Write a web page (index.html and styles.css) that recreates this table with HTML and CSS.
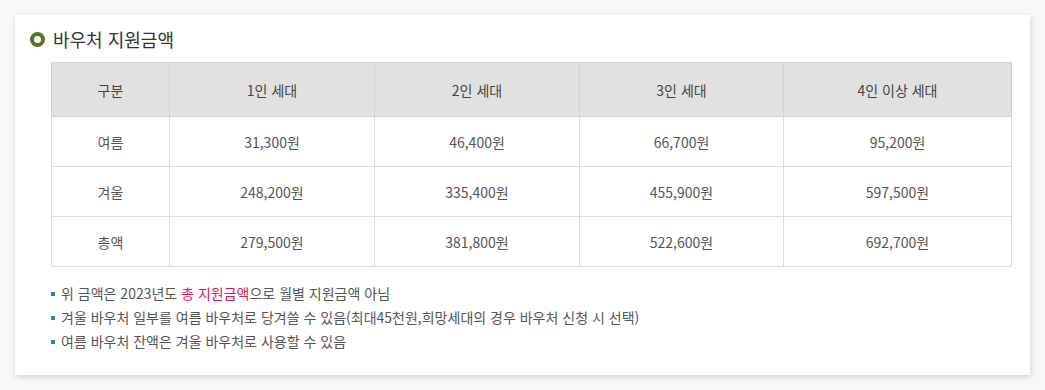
FILE: index.html
```html
<!DOCTYPE html>
<html lang="ko">
<head>
<meta charset="utf-8">
<title>바우처 지원금액</title>
<link rel="stylesheet" href="styles.css">
</head>
<body>
<div class="card">
  <h2 class="title"><span class="ring"></span>바우처 지원금액</h2>
  <table class="tbl">
    <colgroup>
      <col class="c1"><col class="c2"><col class="c2"><col class="c3"><col class="c4">
    </colgroup>
    <thead>
      <tr><th>구분</th><th>1인 세대</th><th>2인 세대</th><th>3인 세대</th><th>4인 이상 세대</th></tr>
    </thead>
    <tbody>
      <tr><td>여름</td><td>31,300원</td><td>46,400원</td><td>66,700원</td><td>95,200원</td></tr>
      <tr><td>겨울</td><td>248,200원</td><td>335,400원</td><td>455,900원</td><td>597,500원</td></tr>
      <tr><td>총액</td><td>279,500원</td><td>381,800원</td><td>522,600원</td><td>692,700원</td></tr>
    </tbody>
  </table>
  <ul class="notes">
    <li>위 금액은 2023년도 <span class="red">총 지원금액</span>으로 월별 지원금액 아님</li>
    <li>겨울 바우처 일부를 여름 바우처로 당겨쓸 수 있음(최대45천원,희망세대의 경우 바우처 신청 시 선택)</li>
    <li>여름 바우처 잔액은 겨울 바우처로 사용할 수 있음</li>
  </ul>
</div>
</body>
</html>
```

FILE: styles.css
```css
html, body {
  margin: 0;
  padding: 0;
}
body {
  background: #f8f8f8;
  font-family: "Noto Sans CJK KR", "Noto Sans", sans-serif;
  color: #555;
  padding: 15px;
}
.card {
  background: #fff;
  box-shadow: 1px 2px 6px rgba(0, 0, 0, 0.16);
  padding: 11px 19px 22px 15px;
  box-sizing: border-box;
  width: 1015px;
  height: 360px;
}
.title {
  margin: 0;
  display: flex;
  align-items: center;
  gap: 8px;
  font-size: 18px;
  font-weight: 400;
  line-height: 26px;
  color: #333;
  height: 26px;
}
.ring {
  width: 15px;
  height: 15px;
  border-radius: 50%;
  background: linear-gradient(135deg, #3e7d2a, #7a6a22);
  flex: none;
  display: flex;
  align-items: center;
  justify-content: center;
}
.ring::after {
  content: "";
  width: 7px;
  height: 7px;
  border-radius: 50%;
  background: #fff;
}
.tbl {
  margin: 10px 0 0 21px;
  border-collapse: collapse;
  table-layout: fixed;
  width: 960px;
  font-size: 14px;
  color: #555;
}
.c1 { width: 118px; }
.c2 { width: 205px; }
.c3 { width: 204px; }
.c4 { width: 228px; }
.tbl th, .tbl td {
  border: 1px solid #dcdcdc;
  text-align: center;
  padding: 0;
}
.tbl th {
  background: #e1e1e1;
  border-color: #d3d3d3;
  font-weight: 400;
  color: #444;
  height: 53px;
}
.tbl td {
  height: 49px;
}
.notes {
  list-style: none;
  margin: 14px 0 0 21px;
  padding: 0;
  font-size: 14px;
  line-height: 24px;
  color: #555;
}
.notes li::before {
  content: "";
  display: inline-block;
  vertical-align: middle;
  width: 4px;
  height: 4px;
  margin: -2px 6px 0 0;
  background: #2a8aa6;
}
.red {
  color: #e3145a;
}
```
